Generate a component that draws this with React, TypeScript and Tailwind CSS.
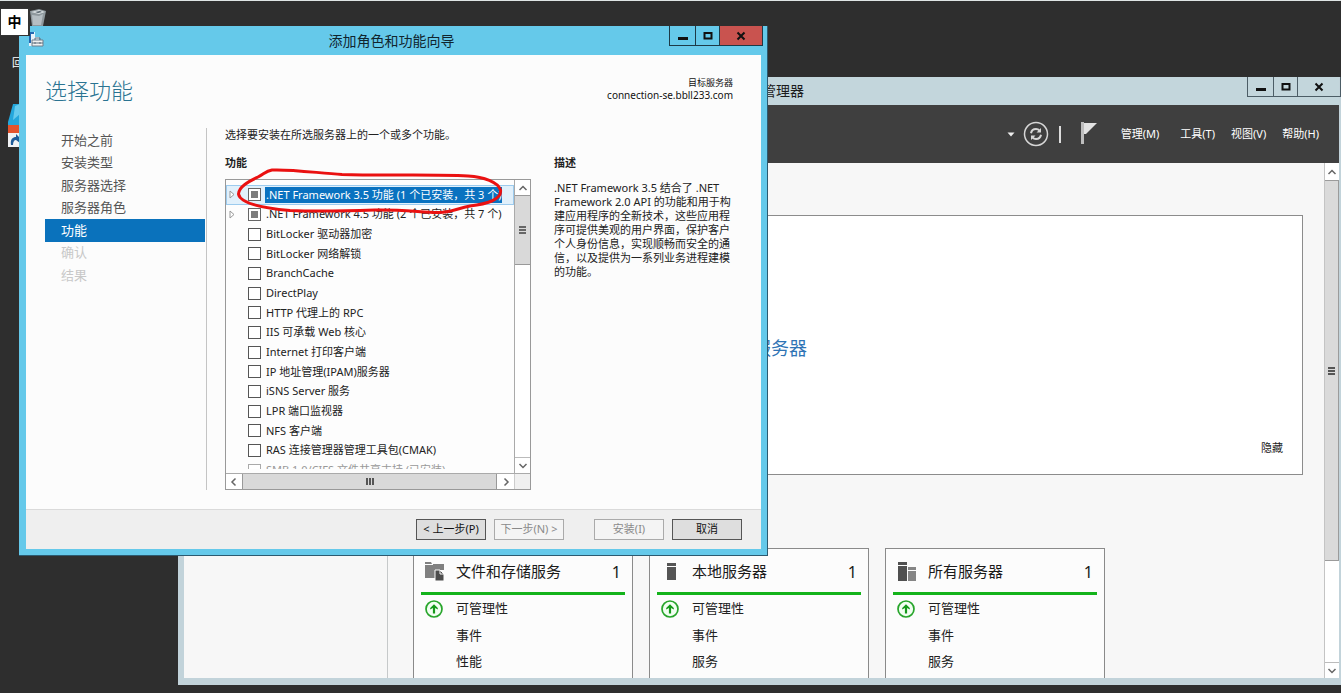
import type { ReactNode } from "react";

const steps = [
  { label: "开始之前", state: "done" },
  { label: "安装类型", state: "done" },
  { label: "服务器选择", state: "done" },
  { label: "服务器角色", state: "done" },
  { label: "功能", state: "current" },
  { label: "确认", state: "disabled" },
  { label: "结果", state: "disabled" },
];

const features = [
  { label: ".NET Framework 3.5 功能 (1 个已安装，共 3 个)", partial: true, selected: true },
  { label: ".NET Framework 4.5 功能 (2 个已安装，共 7 个)", partial: true },
  { label: "BitLocker 驱动器加密" },
  { label: "BitLocker 网络解锁" },
  { label: "BranchCache" },
  { label: "DirectPlay" },
  { label: "HTTP 代理上的 RPC" },
  { label: "IIS 可承载 Web 核心" },
  { label: "Internet 打印客户端" },
  { label: "IP 地址管理(IPAM)服务器" },
  { label: "iSNS Server 服务" },
  { label: "LPR 端口监视器" },
  { label: "NFS 客户端" },
  { label: "RAS 连接管理器管理工具包(CMAK)" },
  { label: "SMB 1.0/CIFS 文件共享支持 (已安装)", installed: true },
];

const Chevron = ({ d }: { d: string }) => (
  <svg viewBox="0 0 10 10" className="h-[10px] w-[10px]" fill="none" stroke="#666" strokeWidth="1.500">
    <path d={d} />
  </svg>
);
const UP = "M1.5 7 5 3.5 8.5 7";
const DOWN = "M1.5 3 5 6.5 8.5 3";
const LEFT = "M6.5 1.5 3 5 6.5 8.5";
const RIGHT = "M3.5 1.5 7 5 3.5 8.5";

const MinimizeIcon = () => (
  <svg width="10" height="10" viewBox="0 0 10 10"><path d="M0 6h10v3H0z" fill="#111" /></svg>
);
const MaximizeIcon = () => (
  <svg width="10" height="10" viewBox="0 0 10 10"><path d="M1.5 2h7v5.5h-7z" fill="none" stroke="#111" strokeWidth="2" /></svg>
);
const CloseIcon = () => (
  <svg width="10" height="10" viewBox="0 0 10 10"><path d="M1.5 1.5l7 7M8.5 1.5l-7 7" fill="none" stroke="#111" strokeWidth="2" /></svg>
);

function WindowButtons({ active }: { active?: boolean }) {
  const line = active ? "border-[#1d3a47]" : "border-[#4c5d66]";
  return (
    <div className={`-mr-[2px] flex h-5 border-x border-b ${line}`}>
      <button aria-label="最小化" className={`flex w-[26px] items-center justify-center border-r ${line}`}><MinimizeIcon /></button>
      <button aria-label="最大化" className={`flex w-6 items-center justify-center border-r ${line}`}><MaximizeIcon /></button>
      <button aria-label="关闭" className={`flex w-[42px] items-center justify-center ${active ? "bg-[#c9534f]" : ""}`}><CloseIcon /></button>
    </div>
  );
}

const FolderIcon = () => (
  <svg width="20" height="20" viewBox="0 0 20 20">
    <path d="M0 0h6l1 2H0zM0 3h8V2h11v6h-9v8H0z" fill="#808080" />
    <path d="M10 8h5l4 4v7h-9z" fill="#4d4d4d" stroke="#fcfcfc" />
    <path d="M15 8v4h4" fill="none" stroke="#fcfcfc" />
  </svg>
);
const ServerIcon = () => (
  <svg width="20" height="20" viewBox="0 0 20 20"><path d="M6 1h9v3H6zM6 5h9v13H6z" fill="#555" /></svg>
);
const ServersIcon = () => (
  <svg width="20" height="20" viewBox="0 0 20 20">
    <path d="M1 0h9v3H1zM1 4h9v15H1z" fill="#505050" />
    <path d="M11 5h8v3h-8zM11 9h8v10h-8z" fill="#858585" />
  </svg>
);
const OkIcon = () => (
  <svg width="18" height="18" viewBox="0 0 18 18">
    <circle cx="9" cy="9" r="8" fill="#f2fff2" stroke="#27a52b" strokeWidth="1.7" />
    <path d="M9 4.2 12.8 8v1.6L10.1 8v5.5H7.9V8L5.2 9.6V8z" fill="#149a1a" />
  </svg>
);

function Tile({ icon, title, rows }: { icon: ReactNode; title: string; rows: string[] }) {
  return (
    <article className="h-[260px] w-[220px] shrink-0 border border-[#8a8a8a] bg-[#fcfcfc] px-[7px]">
      <header className="flex h-[46px] items-center border-b-[3px] border-[#14b31b] pl-1 pr-1 pt-[2px] text-[15px] text-[#1a1a1a]">
        <span className="w-[31px]">{icon}</span>
        <h3 className="flex-1">{title}</h3>
        <span className="text-base">1</span>
      </header>
      <ul className="grid h-20 auto-rows-fr pl-1 pt-px text-[13px] text-[#222]">
        {rows.map((row, i) => (
          <li key={row} className="flex items-center">
            <span className="w-[31px]">{i === 0 && <OkIcon />}</span>
            {row}
          </li>
        ))}
      </ul>
    </article>
  );
}

function ServerManager() {
  return (
    <section className="absolute bottom-2 left-[178px] right-0 top-[77px] flex flex-col border-b-[7px] border-l-[6px] border-r-2 border-[#c2d3da] bg-[#f7f7f7]">
      <header className="flex h-7 shrink-0 items-center justify-between bg-[#c3d6dc] pl-[578px] text-[#1c1c1c]">
        <h2 className="text-sm">管理器</h2>
        <div className="self-start"><WindowButtons /></div>
      </header>
      <div className="flex h-[58px] shrink-0 items-center justify-end bg-[#3f3f3f] pr-5 text-[11px] text-white">
        <svg width="8" height="5" viewBox="0 0 8 5" className="mr-2"><path d="M0.5 0.5h7L4 4.5z" fill="#eee" /></svg>
        <button aria-label="刷新" className="mr-[10px]">
          <svg width="26" height="26" viewBox="0 0 26 26" fill="none" stroke="#d6d6d6">
            <circle cx="13" cy="13" r="11.5" strokeWidth="1.5" />
            <path d="M8 12.2c.5-2.800 2.600-4.200 5-4.200 1.500 0 2.700.6 3.600 1.600M18 13.800c-.5 2.800-2.600 4.200-5 4.200-1.500 0-2.700-.6-3.600-1.600" strokeWidth="2" />
            <path d="M18 7v4.500h-4.500zM8 19v-4.500h4.500z" fill="#d6d6d6" stroke="none" />
          </svg>
        </button>
        <span className="mr-5 h-[17px] w-[2px] bg-[#dcdcdc]" />
        <button aria-label="通知" className="mr-6">
          <svg width="16" height="24" viewBox="0 0 16 24">
            <path d="M0 0h3v22H0z" fill="#bdbdbd" />
            <path d="M3 1h13L5 12H3z" fill="#e2e2e2" />
          </svg>
        </button>
        <nav className="flex">
          <button className="mr-[21px]">管理(M)</button>
          <button className="mr-4">工具(T)</button>
          <button className="mr-4">视图(V)</button>
          <button>帮助(H)</button>
        </nav>
      </div>
      <div className="flex min-h-0 flex-1">
        <aside className="w-[204px] shrink-0 border-r border-[#c6c9ca]" />
        <main className="min-w-0 flex-1 overflow-hidden pl-[25px] pr-[21px] pt-[52px]">
          <div className="mb-[73px] flex h-[260px] flex-col justify-between border border-[#8c8c8c] bg-white pb-[18px] pl-[339px] pr-[19px] pt-[118px]">
            <a href="#servers" className="text-lg text-[#2f74b5]">服务器</a>
            <button className="self-end text-[11px] text-[#222]">隐藏</button>
          </div>
          <div className="flex gap-4">
            <Tile icon={<FolderIcon />} title="文件和存储服务" rows={["可管理性", "事件", "性能"]} />
            <Tile icon={<ServerIcon />} title="本地服务器" rows={["可管理性", "事件", "服务"]} />
            <Tile icon={<ServersIcon />} title="所有服务器" rows={["可管理性", "事件", "服务"]} />
          </div>
        </main>
        <div className="flex w-[15px] flex-col border-l border-[#c4c4c4] bg-white">
          <button aria-label="向上滚动" className="flex h-[17px] items-center justify-center"><Chevron d={UP} /></button>
          <div className="flex h-[381px] flex-col items-center justify-center gap-px border border-l-0 border-[#9b9b9b] bg-[#dadada]">
            <i className="h-[2px] w-[7px] bg-[#555]" /><i className="h-[2px] w-[7px] bg-[#555]" /><i className="h-[2px] w-[7px] bg-[#555]" />
          </div>
          <button aria-label="向下滚动" className="mt-auto flex h-4 items-center justify-center border-t border-[#bbb]"><Chevron d={DOWN} /></button>
        </div>
      </div>
    </section>
  );
}

function FeatureList() {
  return (
    <div className="flex h-[311px] flex-col border border-[#999] bg-[#fdfdfd]">
      <div className="flex min-h-0 flex-1">
        <div className="min-w-0 flex-1 overflow-hidden border-b-4 border-[#fdfdfd] pt-[5px]">
          <ul className="grid h-[295px] auto-rows-fr text-[11px] text-[#222]">
            {features.map((f) => (
              <li key={f.label} className={`flex items-center border pl-[2px] ${f.selected ? "border-[#9ccbee] bg-[#e1f0fb]" : "border-transparent"}`}>
                <span className="flex w-[19px] shrink-0">
                  {f.partial && (
                    <svg width="6" height="9" viewBox="0 0 6 9"><path d="M1 1v7l4-3.500z" fill="#fff" stroke="#999" /></svg>
                  )}
                </span>
                <label className={`flex items-center whitespace-nowrap ${f.installed ? "text-[#999]" : ""}`}>
                  <input
                    type="checkbox"
                    defaultChecked={f.partial || f.installed}
                    disabled={f.installed}
                    className={`mr-1 h-[13px] w-[13px] shrink-0 appearance-none border ${f.partial ? "border-[#666] bg-[#7d7d7d] shadow-[inset_0_0_0_2px_white]" : f.installed ? "border-[#aaa] bg-white" : "border-[#555] bg-white"}`}
                  />
                  <span className={f.selected ? "bg-[#0a72c0] px-px text-white" : "px-px"}>{f.label}</span>
                </label>
              </li>
            ))}
          </ul>
        </div>
        <div className="flex w-4 flex-col border-l border-[#aaa] bg-white">
          <button aria-label="向上滚动" className="flex h-[15px] items-center justify-center"><Chevron d={UP} /></button>
          <div className="flex h-[70px] flex-col items-center justify-center gap-px border-y border-[#999] bg-[#d9d9d9]">
            <i className="h-[2px] w-[7px] bg-[#666]" /><i className="h-[2px] w-[7px] bg-[#666]" /><i className="h-[2px] w-[7px] bg-[#666]" />
          </div>
          <button aria-label="向下滚动" className="mt-auto flex h-4 items-center justify-center border-t border-[#bbb]"><Chevron d={DOWN} /></button>
        </div>
      </div>
      <div className="flex h-4 border-t border-[#aaa] bg-white">
        <button aria-label="向左滚动" className="flex w-4 items-center justify-center"><Chevron d={LEFT} /></button>
        <div className="flex flex-1 items-center justify-center gap-px border-x border-[#999] bg-[#d9d9d9]">
          <i className="h-[7px] w-[2px] bg-[#555]" /><i className="h-[7px] w-[2px] bg-[#555]" /><i className="h-[7px] w-[2px] bg-[#555]" />
        </div>
        <button aria-label="向右滚动" className="flex w-[17px] items-center justify-center"><Chevron d={RIGHT} /></button>
        <span className="w-4 border-l border-[#ccc] bg-[#f0f0f0]" />
      </div>
    </div>
  );
}

const enabledButton = "h-[21px] w-[70px] border border-[#555] bg-[#dedede] text-[#111]";
const disabledButton = "h-[21px] w-[70px] border border-[#aaa] bg-[#f4f4f4] text-[#8a8a8a]";

function Wizard() {
  return (
    <section className="absolute left-[19px] top-[26px] flex h-[530px] w-[749px] flex-col border-b border-r border-[#2c5a70] bg-[#65c9ea] pb-[6px] pl-[7px] pr-[6px]">
      <header className="flex h-[29px] shrink-0">
        <svg width="16" height="16" viewBox="0 0 16 16" className="ml-[2px] mt-[5px]">
          <path d="M1 1h6v5h4v9H1z" fill="#e9f3fa" />
          <path d="M1 1h5v2H3v9H1z" fill="#2468b0" />
          <path d="M4 9h11v6H4z" fill="#f2f2f2" stroke="#6f7f8c" />
          <path d="M7 9V7h5v2M4 12h11M7 11v2M12 11v2" fill="none" stroke="#60707e" />
        </svg>
        <h1 className="flex-1 self-center pl-[70px] text-center text-sm text-[#10252e]">添加角色和功能向导</h1>
        <WindowButtons active />
      </header>
      <div className="flex min-h-0 flex-1 flex-col bg-[#fcfcfc]">
        <div className="flex h-[73px] shrink-0 justify-between pl-[19px] pr-7">
          <h2 className="pt-[19px] text-[22px] font-light leading-8 text-[#2a7391]">选择功能</h2>
          <p className="pt-[22px] text-right text-[9px] leading-3 text-[#111]">
            目标服务器<br />
            <span className="text-[10px]">connection-se.bbll233.com</span>
          </p>
        </div>
        <div className="flex flex-1 pl-[19px]">
          <nav className="h-[362px] w-[162px] shrink-0 border-r border-[#c4c4c4] pr-px pt-px">
            <ol className="grid h-[158px] auto-rows-fr text-[13px]">
              {steps.map((s) => (
                <li
                  key={s.label}
                  className={`flex items-center pl-4 ${s.state === "current" ? "bg-[#0a72bc] text-white" : s.state === "disabled" ? "text-[#c8c8c8]" : "text-[#555]"}`}
                >
                  {s.label}
                </li>
              ))}
            </ol>
          </nav>
          <div className="ml-[18px] w-[306px] shrink-0 text-[11px] text-[#222]">
            <p className="leading-[14px]">选择要安装在所选服务器上的一个或多个功能。</p>
            <h3 className="mb-[9px] mt-[14px] font-bold leading-[14px]">功能</h3>
            <FeatureList />
          </div>
          <div className="ml-[23px] w-[184px] text-[11px] leading-[14px] text-[#222]">
            <h3 className="mb-[11px] mt-7 font-bold">描述</h3>
            <p>
              .NET Framework 3.5 结合了 .NET Framework 2.0 API 的功能和用于构建应用程序的全新技术，这些应用程序可提供美观的用户界面，保护客户个人身份信息，实现顺畅而安全的通信，以及提供为一系列业务进程建模的功能。
            </p>
          </div>
        </div>
        <footer className="flex h-10 items-center justify-end border-t border-[#dadada] bg-[#efefef] pr-[19px] text-[11px]">
          <button className={`mr-2 ${enabledButton}`}>&lt; 上一步(P)</button>
          <button disabled className={`mr-[30px] ${disabledButton}`}>下一步(N) &gt;</button>
          <button disabled className={`mr-2 ${disabledButton}`}>安装(I)</button>
          <button className={enabledButton}>取消</button>
        </footer>
      </div>
      <svg className="pointer-events-none absolute left-[211px] top-[134px]" width="280" height="60" viewBox="230 160 280 60" fill="none" stroke="#ea1111" strokeWidth="3" strokeLinejoin="round" strokeLinecap="round">
        <path d="M272 170C290 169 318 173 342 174.500C385 176 430 174 468 176C484 177 498 182 500.500 190C502 200 486 204 470 206C456 209 448 213 438 212.500C420 212 400 209.500 375 210C345 211 315 211.500 290 210.500C262 208 240 203 238.500 194C239 186 250 181 258 177C264 174 266 171 272 170Z" />
      </svg>
    </section>
  );
}

export default function App() {
  return (
    <div className="relative h-screen overflow-hidden bg-[#2e2e2e] font-['Noto_Sans','Noto_Sans_CJK_SC',sans-serif]" lang="zh-CN">
      <div className="h-px bg-[#dfe5e5]" />
      <svg className="absolute left-[29px] top-[9px]" width="18" height="18" viewBox="0 0 18 18">
        <path d="M1 2l9-2 7 2-3 15H3z" fill="#8e989d" />
        <path d="M2 3l8-2 6 2-6 2z" fill="#d9dfe2" />
        <path d="M3 6l7 1 4-2-2 11H4z" fill="#b5bec3" />
        <path d="M6 3l5-1 2 1-4 1z" fill="#53606a" />
      </svg>
      <span className="absolute left-3 top-[56px] text-[11px] leading-[14px] text-white">回</span>
      <svg className="absolute left-2 top-[104px]" width="12" height="43" viewBox="0 0 12 43">
        <path d="M5 0h7v21H0v-3z" fill="#24a7dc" />
        <path d="M7 2l5-2v10L5 16z" fill="#66cbee" />
        <path d="M0 21h12v8H0z" fill="#e4532d" />
        <path d="M0 29h12v14H0z" fill="#f0f2f4" />
        <path d="M3 41c-1-6 2-8 5-8v-3l4 4v5l-4-3c-2 0-3 2-3 5z" fill="#1f5c99" />
      </svg>
      <ServerManager />
      <Wizard />
      <div className="absolute left-0 top-2 flex h-7 w-[30px] items-center justify-center border border-r-2 border-[#333] bg-white text-sm font-bold text-black">中</div>
    </div>
  );
}
